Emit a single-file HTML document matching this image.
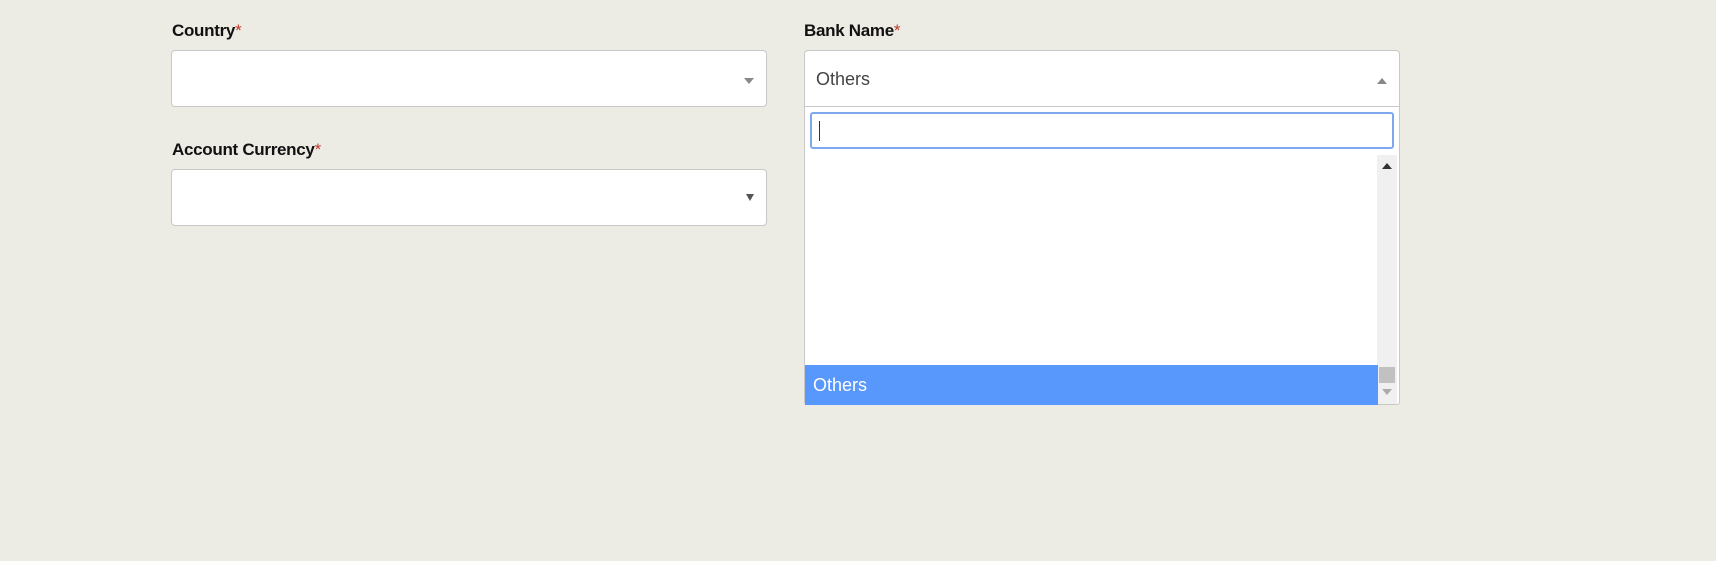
<!DOCTYPE html>
<html><head><style>
body{margin:0;width:1716px;height:561px;background:#ecebe4;font-family:"Liberation Sans",sans-serif;position:relative;overflow:hidden}
.lbl{position:absolute;font-size:17px;font-weight:bold;color:#111;letter-spacing:-0.3px}
.lbl span{color:#c0392b;font-weight:normal}
.box{position:absolute;background:#fff;border:1px solid #c8c8c8;border-radius:4px;box-sizing:border-box}
.tri{position:absolute;width:0;height:0;border-left:5px solid transparent;border-right:5px solid transparent}
</style></head><body>
<div class="lbl" style="left:172px;top:21px">Country<span>*</span></div>
<div class="box" style="left:171px;top:50px;width:596px;height:57px"><div class="tri" style="right:12px;top:27px;border-top:6px solid #888"></div></div>
<div class="lbl" style="left:172px;top:140px">Account Currency<span>*</span></div>
<div class="box" style="left:171px;top:169px;width:596px;height:57px"><div class="tri" style="right:12px;top:24px;border-left-width:4px;border-right-width:4px;border-top:7px solid #555"></div></div>
<div class="lbl" style="left:804px;top:21px">Bank Name<span>*</span></div>
<div class="box" style="left:804px;top:50px;width:596px;height:355px;border-radius:4px 4px 3px 3px">
  <div style="position:absolute;left:11px;top:18px;font-size:18px;color:#444">Others</div>
  <div class="tri" style="right:12px;top:27px;border-bottom:6px solid #888"></div>
  <div style="position:absolute;left:0;right:0;top:55px;border-top:1px solid #c8c8c8"></div>
  <div style="position:absolute;left:5px;top:61px;width:584px;height:37px;border:2px solid #7fa7ee;border-radius:3px;box-sizing:border-box"><div style="position:absolute;left:7px;top:7px;width:1px;height:20px;background:#333"></div></div>
  <div style="position:absolute;right:2px;top:104px;width:20px;height:249px;background:#f0f0f0">
    <div class="tri" style="left:5px;top:8px;border-bottom:6px solid #333"></div>
    <div style="position:absolute;left:2px;top:212px;width:16px;height:16px;background:#c1c1c1"></div>
    <div class="tri" style="left:5px;top:234px;border-top:6px solid #aaa"></div>
  </div>
  <div style="position:absolute;left:0;top:314px;width:573px;height:40px;background:#5897fb;color:#fff;font-size:18px;line-height:40px;padding-left:8px;box-sizing:border-box">Others</div>
</div>
</body></html>
